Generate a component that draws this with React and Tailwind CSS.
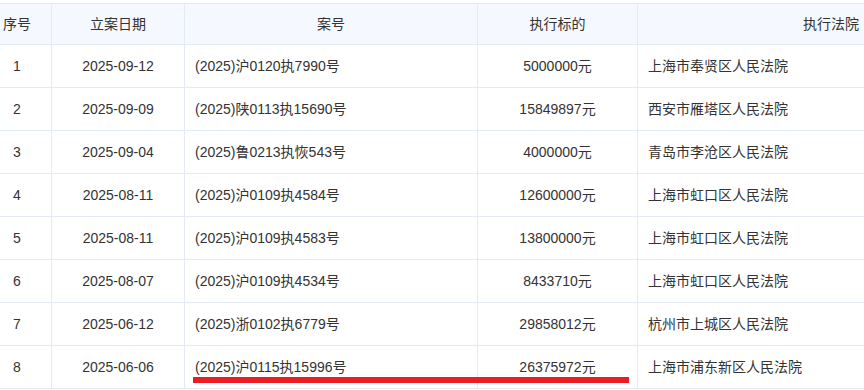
import React from "react";

const rows = [
  ["1", "2025-09-12", "(2025)沪0120执7990号", "5000000元", "上海市奉贤区人民法院"],
  ["2", "2025-09-09", "(2025)陕0113执15690号", "15849897元", "西安市雁塔区人民法院"],
  ["3", "2025-09-04", "(2025)鲁0213执恢543号", "4000000元", "青岛市李沧区人民法院"],
  ["4", "2025-08-11", "(2025)沪0109执4584号", "12600000元", "上海市虹口区人民法院"],
  ["5", "2025-08-11", "(2025)沪0109执4583号", "13800000元", "上海市虹口区人民法院"],
  ["6", "2025-08-07", "(2025)沪0109执4534号", "8433710元", "上海市虹口区人民法院"],
  ["7", "2025-06-12", "(2025)浙0102执6779号", "29858012元", "杭州市上城区人民法院"],
  ["8", "2025-06-06", "(2025)沪0115执15996号", "26375972元", "上海市浦东新区人民法院"],
];

const cols = "grid grid-cols-[52px_133px_293px_160px_386px]";

const App = () => {
  return (
    <div
      className="relative w-[864px] h-[390px] overflow-hidden bg-white text-[14px] text-[#333]"
      style={{ fontFamily: '"Liberation Sans", "Noto Sans CJK SC", sans-serif' }}
    >
      <div className="w-[1024px] pt-[3px]">
        {/* header */}
        <div className={`${cols} h-[42px] bg-[#f5f8fe] border-y border-[#e3eaf6]`}>
          <div className="flex items-center justify-center pr-[17px] border-r border-[#e3eaf6]">序号</div>
          <div className="flex items-center justify-center border-r border-[#e3eaf6]">立案日期</div>
          <div className="flex items-center justify-center border-r border-[#e3eaf6]">案号</div>
          <div className="flex items-center justify-center border-r border-[#e3eaf6]">执行标的</div>
          <div className="flex items-center justify-center">执行法院</div>
        </div>

        {rows.map((r, i) => (
          <div key={i} className={`${cols} h-[43px] border-b border-[#e3eaf6]`}>
            <div className="flex items-center justify-center pr-[17px] border-r border-[#e3eaf6]">{r[0]}</div>
            <div className="flex items-center justify-center border-r border-[#e3eaf6]">{r[1]}</div>
            <div className="flex items-center pl-[10px] border-r border-[#e3eaf6]">{r[2]}</div>
            <div className="flex items-center justify-center border-r border-[#e3eaf6]">{r[3]}</div>
            <div className="flex items-center pl-[10px]">{r[4]}</div>
          </div>
        ))}
      </div>

      {/* red annotation line */}
      <div className="absolute left-[193px] top-[377px] w-[436px] h-[6px] bg-[#ec1c24]"></div>
    </div>
  );
};

export default App;
